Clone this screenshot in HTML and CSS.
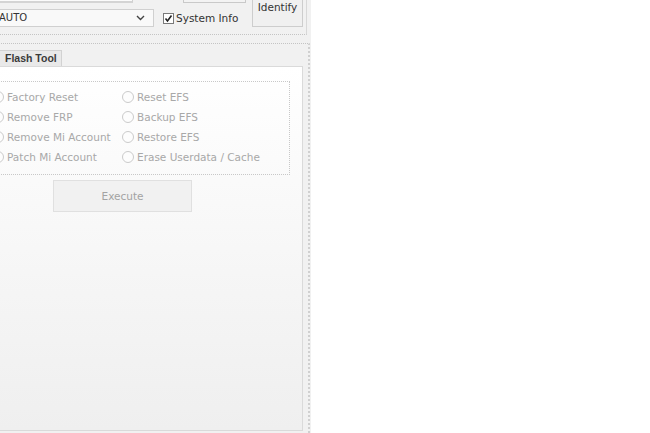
FILE: index.html
```html
<!DOCTYPE html>
<html>
<head>
<meta charset="utf-8">
<link rel="stylesheet" href="styles.css">
</head>
<body>
<div class="app">
  <div class="top">
    <div class="top-left">
      <div class="row1">
        <div class="textbox"></div>
        <div class="small-btn"></div>
      </div>
      <div class="row2">
        <div class="combo">
          <span class="combo-text">AUTO</span>
          <svg class="chev" width="9" height="6" viewBox="0 0 9 6"><path d="M1 1 L4.5 4.5 L8 1" fill="none" stroke="#444" stroke-width="1.4"/></svg>
        </div>
        <div class="check">
          <svg width="11" height="11" viewBox="0 0 11 11"><rect x="0.5" y="0.5" width="10" height="10" fill="#fff" stroke="#7a7a7a"/><path d="M2.5 5.5 L4.5 8 L8.5 2.5" fill="none" stroke="#222" stroke-width="1.6"/></svg>
          <span class="check-label">System Info</span>
        </div>
      </div>
    </div>
    <div class="identify">Identify</div>
  </div>
  <div class="bottom">
    <div class="tabs">
      <div class="tab">Flash Tool</div>
    </div>
    <div class="panel">
      <div class="options">
        <label class="opt"><span class="radio checked"></span>Factory Reset</label>
        <label class="opt"><span class="radio"></span>Reset EFS</label>
        <label class="opt"><span class="radio"></span>Remove FRP</label>
        <label class="opt"><span class="radio"></span>Backup EFS</label>
        <label class="opt"><span class="radio"></span>Remove Mi Account</label>
        <label class="opt"><span class="radio"></span>Restore EFS</label>
        <label class="opt"><span class="radio"></span>Patch Mi Account</label>
        <label class="opt"><span class="radio"></span>Erase Userdata / Cache</label>
      </div>
      <div class="execute">Execute</div>
    </div>
  </div>
</div>
</body>
</html>
```
FILE: styles.css
```css
html, body {
  margin: 0;
  padding: 0;
  background: #ffffff;
  overflow: hidden;
}
body {
  width: 650px;
  height: 433px;
  font-family: "DejaVu Sans", Verdana, sans-serif;
  font-size: 10px;
}
.app {
  margin: -20px 0 0 -14px;
  width: 325px;
  height: 453px;
  background: #f1f1f1;
  box-sizing: border-box;
  padding-left: 2px;
}
.top {
  width: 319px;
  box-sizing: border-box;
  display: flex;
  align-items: flex-start;
  padding: 6px 3px 7px 6px;
  border-right: 1px solid #d8d8d8;
  border-bottom: 1px dotted #c4c4c4;
}
.top-left {
  width: 252px;
  display: flex;
  flex-direction: column;
}
.row1 {
  display: flex;
  gap: 50px;
  height: 17px;
}
.textbox {
  width: 139px;
  height: 17px;
  box-sizing: border-box;
  background: #fbfbfb;
  border: 1px solid #cfcfcf;
  border-bottom: 2px solid #d4d4d4;
}
.small-btn {
  width: 63px;
  height: 17px;
  box-sizing: border-box;
  background: #f3f3f3;
  border: 1px solid #c9c9c9;
}
.row2 {
  margin-top: 6px;
  display: flex;
  align-items: center;
  gap: 9px;
}
.combo {
  width: 160px;
  height: 18px;
  box-sizing: border-box;
  border: 1px solid #d0d0d0;
  background: #f9f9f9;
  display: flex;
  align-items: center;
  justify-content: space-between;
  padding: 0 8px 0 4px;
  color: #333;
}
.combo-text {
  line-height: 16px;
}
.chev {
  display: block;
}
.check {
  display: flex;
  align-items: center;
  gap: 2px;
  color: #333;
}
.check svg {
  display: block;
}
.check-label {
  font-size: 10.5px;
  line-height: 14px;
}
.identify {
  margin: 1px 0 0 6px;
  width: 51px;
  height: 40px;
  box-sizing: border-box;
  background: #f0f0f0;
  border: 1px solid #cdcdcd;
  display: flex;
  align-items: center;
  justify-content: center;
  color: #333;
  font-size: 10.5px;
}
.bottom {
  margin-top: 8px;
  width: 322px;
  box-sizing: border-box;
  border-top: 1px dotted #c4c4c4;
  border-right: 2px dotted #d0d0d0;
  padding: 6px 5px 0 2px;
  height: 410px;
}
.tabs {
  display: flex;
  height: 16px;
}
.tab {
  height: 16px;
  box-sizing: border-box;
  padding: 0 4px 0 14px;
  white-space: nowrap;
  background: #e9e9e9;
  border: 1px solid #d2d2d2;
  border-bottom: none;
  font-family: "Liberation Sans", Arial, sans-serif;
  font-weight: bold;
  font-size: 10.5px;
  line-height: 15px;
  color: #3a3a3a;
}
.panel {
  width: 313px;
  height: 365px;
  box-sizing: border-box;
  border: 1px solid #dadada;
  border-left: none;
  background: linear-gradient(#ffffff, #efefef);
  padding: 14px 0 0 1px;
}
.options {
  width: 299px;
  box-sizing: border-box;
  border: 1px dotted #c8c8c8;
  padding: 5px 0 7px 0;
  display: grid;
  grid-template-columns: 130px 1fr;
  grid-auto-rows: 20px;
}
.opt {
  display: flex;
  align-items: center;
  gap: 3px;
  color: #a8a8a8;
  white-space: nowrap;
  font-size: 10.5px;
}
.radio {
  width: 12px;
  height: 12px;
  box-sizing: border-box;
  border-radius: 50%;
  border: 1px solid #cbcbcb;
  background: #fdfdfd;
  position: relative;
  flex: none;
}
.radio.checked::after {
  content: "";
  position: absolute;
  left: 3px;
  top: 3px;
  width: 4px;
  height: 4px;
  border-radius: 50%;
  background: #9a9a9a;
}
.execute {
  margin: 5px 0 0 62px;
  width: 139px;
  height: 32px;
  box-sizing: border-box;
  background: #f1f1f1;
  border: 1px solid #e0e0e0;
  display: flex;
  align-items: center;
  justify-content: center;
  color: #a3a3a3;
  font-size: 10.5px;
}
```
